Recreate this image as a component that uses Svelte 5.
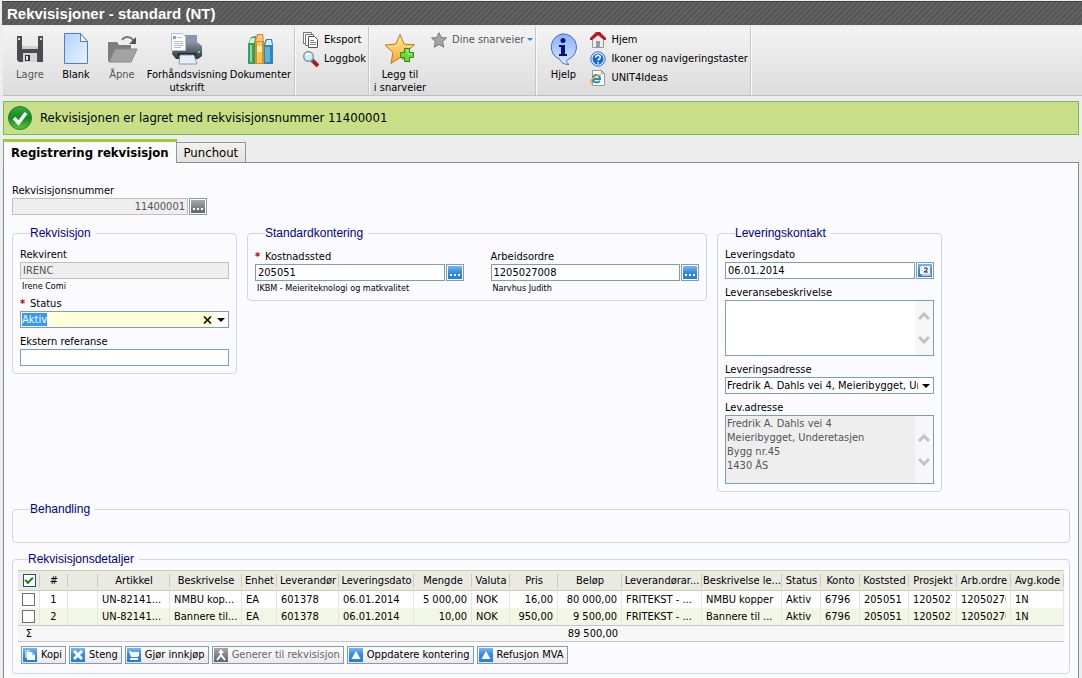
<script>
	import { onMount } from 'svelte';

	const columns = [
		{ key: 'nr', label: '#', width: 28, align: 'center' },
		{ key: 'blank', label: '', width: 30 },
		{ key: 'article', label: 'Artikkel', width: 72 },
		{ key: 'text', label: 'Beskrivelse', width: 72 },
		{ key: 'unit', label: 'Enhet', width: 35 },
		{ key: 'supplier', label: 'Leverandør', width: 62 },
		{ key: 'date', label: 'Leveringsdato', width: 75 },
		{ key: 'amount', label: 'Mengde', width: 58, align: 'right' },
		{ key: 'currency', label: 'Valuta', width: 38 },
		{ key: 'price', label: 'Pris', width: 48, align: 'right' },
		{ key: 'total', label: 'Beløp', width: 64, align: 'right' },
		{ key: 'supplierArticle', label: 'Leverandørar...', width: 80 },
		{ key: 'supplierText', label: 'Beskrivelse le...', width: 80 },
		{ key: 'status', label: 'Status', width: 39 },
		{ key: 'account', label: 'Konto', width: 39 },
		{ key: 'costCenter', label: 'Koststed', width: 49 },
		{ key: 'project', label: 'Prosjekt', width: 48 },
		{ key: 'workOrder', label: 'Arb.ordre', width: 54 },
		{ key: 'taxCode', label: 'Avg.kode', width: 53 }
	];

	const shared = {
		blank: '',
		article: 'UN-82141...',
		unit: 'EA',
		supplier: '601378',
		date: '06.01.2014',
		currency: 'NOK',
		supplierArticle: 'FRITEKST - ...',
		status: 'Aktiv',
		account: '6796',
		costCenter: '205051',
		project: '1205027',
		workOrder: '12050270',
		taxCode: '1N'
	};

	const rows = [
		{
			...shared,
			nr: 1,
			text: 'NMBU kop...',
			amount: '5 000,00',
			price: '16,00',
			total: '80 000,00',
			supplierText: 'NMBU kopper'
		},
		{
			...shared,
			nr: 2,
			text: 'Bannere til...',
			amount: '10,00',
			price: '950,00',
			total: '9 500,00',
			supplierText: 'Bannere til ...'
		}
	];

	const actions = [
		{ label: 'Kopi', icon: 'copy' },
		{ label: 'Steng', icon: 'close' },
		{ label: 'Gjør innkjøp', icon: 'cart' },
		{ label: 'Generer til rekvisisjon', icon: 'merge', disabled: true },
		{ label: 'Oppdatere kontering', icon: 'up' },
		{ label: 'Refusjon MVA', icon: 'up' }
	];

	const address = 'Fredrik A. Dahls vei 4\nMeieribygget, Underetasjen\nBygg nr.45\n1430 ÅS';

	let allChecked = $state(true);
	let statusInput;

	// The status field has focus when the form opens
	onMount(() => {
		statusInput.focus();
		statusInput.select();
	});
</script>

{#snippet lookup(label, gray = false)}
	<button class="lookup" aria-label={label}>
		<svg width="14" height="13" viewBox="0 0 14 13">
			<rect width="14" height="13" fill={gray ? 'url(#grayFill)' : 'url(#blueFill)'} />
			<path d="M2 8h2v2H2zM6 8h2v2H6zM10 8h2v2h-2z" fill="#fff" />
		</svg>
	</button>
{/snippet}

{#snippet scroller()}
	<div class="scroller" aria-hidden="true">
		<svg width="12" height="8" viewBox="0 0 12 8"><path d="M1 7l5-5 5 5" fill="none" stroke="#c3c3c3" stroke-width="3" /></svg>
		<svg width="12" height="8" viewBox="0 0 12 8"><path d="M1 1l5 5 5-5" fill="none" stroke="#c3c3c3" stroke-width="3" /></svg>
	</div>
{/snippet}

{#snippet caret()}
	<svg width="8" height="4" viewBox="0 0 8 4"><path d="M0 0h8L4 4z" fill="#000" /></svg>
{/snippet}

<svg class="defs" width="0" height="0" aria-hidden="true">
	<defs>
		<linearGradient id="blueFill" x1="0" y1="0" x2="0" y2="1">
			<stop offset="0" stop-color="#7db8f2" />
			<stop offset=".45" stop-color="#3a8be0" />
			<stop offset="1" stop-color="#1f7fe0" />
		</linearGradient>
		<linearGradient id="grayFill" x1="0" y1="0" x2="0" y2="1">
			<stop offset="0" stop-color="#a9a9a9" />
			<stop offset="1" stop-color="#636363" />
		</linearGradient>
		<linearGradient id="pageFill" x1="0" y1="0" x2="1" y2="1">
			<stop offset="0" stop-color="#b5d3fb" />
			<stop offset="1" stop-color="#e8f2ff" />
		</linearGradient>
		<linearGradient id="starFill" x1="0" y1="0" x2="0" y2="1">
			<stop offset="0" stop-color="#ffe7a8" />
			<stop offset="1" stop-color="#f7ab22" />
		</linearGradient>
		<linearGradient id="infoFill" x1="0" y1="0" x2="0" y2="1">
			<stop offset="0" stop-color="#8fb0f5" />
			<stop offset=".7" stop-color="#bcd6ff" />
			<stop offset="1" stop-color="#d8f2ff" />
		</linearGradient>
		<linearGradient id="okFill" x1="0" y1="0" x2="0" y2="1">
			<stop offset="0" stop-color="#35a845" />
			<stop offset=".5" stop-color="#138a1c" />
			<stop offset="1" stop-color="#5cc93a" />
		</linearGradient>
		<linearGradient id="printFill" x1="0" y1="0" x2="0" y2="1">
			<stop offset="0" stop-color="#8c97a5" />
			<stop offset="1" stop-color="#2b323d" />
		</linearGradient>
	</defs>
</svg>

<div class="page">
	<header><h1>Rekvisisjoner - standard (NT)</h1></header>

	<nav class="toolbar">
		<div class="group">
			<button class="tool" disabled>
				<svg width="32" height="32" viewBox="0 0 32 32">
					<path d="M3 3h26v26H5l-2-2z" fill="#4b4b4d" />
					<path d="M8 3h16v13H8z" fill="#ececec" />
					<path d="M8 13h16v3H8z" fill="#cfcfcf" />
					<path d="M4 5h2v2H4zM26 5h2v2h-2z" fill="#ddd" />
					<path d="M9 20h14v9H9z" fill="#d4d4d4" />
					<path d="M11 22h5v6h-5z" fill="#333" />
					<path d="M12 23h2v4h-2z" fill="#e8e8e8" />
				</svg>
				<span>Lagre</span>
			</button>
			<button class="tool">
				<svg width="32" height="32" viewBox="0 0 32 32">
					<path d="M4.500 .5h16l7 8v22h-23z" fill="url(#pageFill)" stroke="#4a80d0" />
					<path d="M20.500 .5v8h7z" fill="#fff" stroke="#4a80d0" />
				</svg>
				<span>Blank</span>
			</button>
			<button class="tool" disabled>
				<svg width="32" height="32" viewBox="0 0 32 32">
					<path d="M2 28V9h9l2 3h12v5H11L5 29z" fill="#7d7d7d" />
					<path d="M9 16h22l-6 13H3z" fill="#a3a3a3" stroke="#868686" />
					<path d="M16 7c3-4 9-4 12 1" fill="none" stroke="#777" stroke-width="2" />
					<path d="M30 4v7h-7z" fill="#555" />
				</svg>
				<span>Åpne</span>
			</button>
			<button class="tool wide">
				<svg width="32" height="32" viewBox="0 0 32 32">
					<path d="M14 2h12v11H14z" fill="#8797ae" />
					<path d="M2 13l4-4h20l5 4v10l-4 3H5l-4-5z" fill="url(#printFill)" />
					<path d="M7 20h18v3H7z" fill="#1e242e" />
					<path d="M9 22h14l3 9H8z" fill="#e6eff8" stroke="#8a9bb0" />
					<path d="M.5 .5h11l3 3v14H.5z" fill="#fff" stroke="#b5c0cc" />
					<path d="M2 3h3v3H2z" fill="#7ba6d8" />
					<path d="M6 4.500h5M3 8.500h9M3 10.500h9M3 12.500h9M3 14.500h7" stroke="#b4c0cd" />
					<path d="M27 18h2v2h-2z" fill="#6be04a" />
				</svg>
				<span>Forhåndsvisning utskrift</span>
			</button>
			<button class="tool docs">
				<svg width="32" height="32" viewBox="0 0 32 32">
					<path d="M3 11l3-7 5-1v28H3z" fill="#35a05e" />
					<path d="M4 10l2-5h4l-1 5z" fill="#d8eee0" />
					<path d="M5 12h2v17H5z" fill="#8fd9a8" />
					<path d="M18 13l3-7h6l1 6v19H18z" fill="#2e86b8" />
					<path d="M20 12l2-5h4l1 5z" fill="#d7ecf5" />
					<path d="M20 14h5v15h-5z" fill="#5eb4e0" />
					<path d="M10 8l2-7h6l1 7v23h-9z" fill="#e58a1f" />
					<path d="M12 9h5v21h-5z" fill="#ffc45c" />
					<path d="M11 8l2-6h4l1 6z" fill="#fdc88a" />
					<path d="M12 13h5v6h-5z" fill="#fff0b8" />
				</svg>
				<span>Dokumenter</span>
			</button>
		</div>

		<div class="group list">
			<button class="link">
				<svg width="16" height="16" viewBox="0 0 16 16">
					<path d="M.5 .5h8v11h-8z" fill="#fff" stroke="#777" />
					<path d="M2.500 2.500h8v11h-8z" fill="#fff" stroke="#777" />
					<path d="M5.500 4.500h6l3 3v8h-9z" fill="#fff" stroke="#555" />
					<path d="M7 8.500h4M7 10.500h6M7 12.500h6" stroke="#888" />
				</svg>
				Eksport
			</button>
			<button class="link">
				<svg width="16" height="16" viewBox="0 0 16 16">
					<path d="M9 9l6 6" stroke="#b01818" stroke-width="4" />
					<path d="M9 9l2 2" stroke="#555" stroke-width="3" />
					<circle cx="5.500" cy="5.500" r="4.800" fill="#c5effa" stroke="#8a97a5" stroke-width="1.500" />
					<path d="M3 5c0-2 2-3 4-2" fill="none" stroke="#fff" stroke-width="1.500" />
				</svg>
				Loggbok
			</button>
		</div>

		<div class="group">
			<button class="tool fav">
				<svg width="32" height="32" viewBox="0 0 32 32">
					<path d="M16 1.500l4.200 9.700 10.300.6-8 7 3 10.200-9.500-4.500-9 6 2-11L1 12l10.800-1z" fill="url(#starFill)" stroke="#b87a1c" />
					<path d="M20.500 15.500h5v4h4v5h-4v4h-5v-4h-4v-5h4z" fill="#6fd53f" stroke="#2c8a1d" />
					<path d="M22 17h2v4h4" fill="none" stroke="#b6f08f" />
				</svg>
				<span>Legg til<br />i snarveier</span>
			</button>
			<div class="list">
				<button class="link muted">
					<svg width="16" height="16" viewBox="0 0 16 16">
						<path d="M8 .8l2.200 4.700 5.300.5-4 3.600 1.300 5.600L8 12.500l-4.800 2.700 1.200-5.600L.6 6l5.200-.5z" fill="#a5a5a5" stroke="#777" />
					</svg>
					<span>Dine snarveier <i></i></span>
				</button>
			</div>
		</div>

		<div class="group">
			<button class="tool">
				<svg width="32" height="32" viewBox="0 0 32 32">
					<path d="M16 .8a13.300 13.300 0 0 1 5 25.700c-2 1-2 3 1 5-5 0-8-2-9-5A13.300 13.300 0 0 1 16 .8z" fill="url(#infoFill)" stroke="#4a68c0" />
					<circle cx="16" cy="7.500" r="2.500" fill="#0b1478" />
					<path d="M12 12h6v9h2v2h-8v-2h2v-7h-2z" fill="#0b1478" />
				</svg>
				<span>Hjelp</span>
			</button>
			<div class="list">
				<a class="link" href="#hjem">
					<svg width="16" height="16" viewBox="0 0 16 16">
						<path d="M2.500 7L8 3l5.500 4v8.500h-11z" fill="#eee" stroke="#999" />
						<path d="M6 9h4v6H6z" fill="#999" />
						<path d="M0 8V6l6-6h4l6 6v2h-2L8 3 2 8z" fill="#c4141d" />
					</svg>
					Hjem
				</a>
				<a class="link" href="#ikoner">
					<svg width="16" height="16" viewBox="0 0 16 16">
						<circle cx="8" cy="8" r="7.200" fill="#e6f1ff" stroke="#2b6fd4" />
						<circle cx="8" cy="8" r="5.500" fill="#1c66d8" />
						<path d="M5.800 6.500c0-3 4.500-3 4.500-.3 0 1.500-2 1.600-2.200 3.300M8 11v1.500" fill="none" stroke="#fff" stroke-width="1.600" />
					</svg>
					Ikoner og navigeringstaster
				</a>
				<a class="link" href="#ideas">
					<svg width="16" height="16" viewBox="0 0 16 16">
						<path d="M2.500 .5h9l3 3v12h-12z" fill="#fff" stroke="#999" />
						<path d="M11.500 .5v3h3z" fill="#ddd" stroke="#999" />
						<path d="M3 9h7c0-5-6-5-7-1s4 6 7 3" fill="none" stroke="#2188d4" stroke-width="2" />
						<path d="M1 14c-2-2 4-10 10-9" fill="none" stroke="#f0ac24" stroke-width="1.500" />
					</svg>
					UNIT4Ideas
				</a>
			</div>
		</div>
	</nav>

	<div class="message" role="status">
		<svg width="26" height="26" viewBox="0 0 26 26">
			<circle cx="13" cy="13" r="11.500" fill="url(#okFill)" stroke="#287c35" />
			<path d="M7 13l4.500 5L19 8" fill="none" stroke="#fff" stroke-width="3.500" />
		</svg>
		<span>Rekvisisjonen er lagret med rekvisisjonsnummer 11400001</span>
	</div>

	<div class="tabs" role="tablist">
		<button class="tab active" role="tab" aria-selected="true">Registrering rekvisisjon</button>
		<button class="tab" role="tab" aria-selected="false">Punchout</button>
	</div>

	<main>
		<div class="field number">
			<label for="reqno">Rekvisisjonsnummer</label>
			<div class="row">
				<input id="reqno" value="11400001" readonly />
				{@render lookup('Søk rekvisisjonsnummer', true)}
			</div>
		</div>

		<div class="groups">
			<fieldset class="narrow">
				<legend>Rekvisisjon</legend>
				<div class="field">
					<label for="requester">Rekvirent</label>
					<input id="requester" value="IRENC" readonly />
					<div class="hint">Irene Comi</div>
				</div>
				<div class="field">
					<label for="status"><b>*</b>Status</label>
					<div class="combo status">
						<input id="status" value="Aktiv" bind:this={statusInput} />
						<button class="clear" aria-label="Tøm">
							<svg width="9" height="8" viewBox="0 0 9 8"><path d="M1 .5l7 7M8 .5l-7 7" stroke="#000" stroke-width="1.500" /></svg>
						</button>
						<button class="open" aria-label="Velg status">{@render caret()}</button>
					</div>
				</div>
				<div class="field">
					<label for="extref">Ekstern referanse</label>
					<input id="extref" />
				</div>
			</fieldset>

			<fieldset class="posting">
				<legend>Standardkontering</legend>
				<div class="field">
					<label for="cost"><b>*</b>Kostnadssted</label>
					<div class="row">
						<input id="cost" value="205051" />
						{@render lookup('Søk kostnadssted')}
					</div>
					<div class="hint">IKBM - Meieriteknologi og matkvalitet</div>
				</div>
				<div class="field">
					<label for="order">Arbeidsordre</label>
					<div class="row">
						<input id="order" value="1205027008" />
						{@render lookup('Søk arbeidsordre')}
					</div>
					<div class="hint">Narvhus Judith</div>
				</div>
			</fieldset>

			<fieldset class="narrow">
				<legend>Leveringskontakt</legend>
				<div class="field">
					<label for="date">Leveringsdato</label>
					<div class="row">
						<input id="date" value="06.01.2014" />
						<button class="lookup" aria-label="Velg dato">
							<svg width="14" height="13" viewBox="0 0 14 13">
								<rect width="14" height="13" fill="url(#blueFill)" />
								<path d="M3 2h9v8H2V3z" fill="#f3f6fb" />
								<path d="M12 10V4l1 8H4l-1-2z" fill="#b8c8dc" />
								<path d="M6 4h3v2L6 8h4" fill="none" stroke="#223" />
							</svg>
						</button>
					</div>
				</div>
				<div class="field">
					<label for="deliverytext">Leveransebeskrivelse</label>
					<div class="memo">
						<textarea id="deliverytext"></textarea>
						{@render scroller()}
					</div>
				</div>
				<div class="field">
					<label for="place">Leveringsadresse</label>
					<div class="combo">
						<select id="place">
							<option>Fredrik A. Dahls vei 4, Meieribygget, Underetasjen</option>
						</select>
						<span class="open">{@render caret()}</span>
					</div>
				</div>
				<div class="field">
					<label for="address">Lev.adresse</label>
					<div class="memo tall">
						<textarea id="address" readonly value={address}></textarea>
						{@render scroller()}
					</div>
				</div>
			</fieldset>
		</div>

		<fieldset class="processing">
			<legend>Behandling</legend>
		</fieldset>

		<fieldset class="details">
			<legend>Rekvisisjonsdetaljer</legend>
			<table>
				<colgroup>
					<col style="width: 22px" />
					{#each columns as col}
						<col style="width: {col.width}px" />
					{/each}
				</colgroup>
				<thead>
					<tr>
						<th class="pick"><input type="checkbox" aria-label="Velg alle" bind:checked={allChecked} /></th>
						{#each columns as col}
							<th>{col.label}</th>
						{/each}
					</tr>
				</thead>
				<tbody>
					{#each rows as row}
						<tr>
							<td class="pick"><input type="checkbox" aria-label="Velg rad {row.nr}" /></td>
							{#each columns as col}
								<td class={col.align}><div>{row[col.key]}</div></td>
							{/each}
						</tr>
					{/each}
				</tbody>
				<tfoot>
					<tr>
						<td class="center">Σ</td>
						{#each columns as col}
							<td class={col.align}>{col.key === 'total' ? '89 500,00' : ''}</td>
						{/each}
					</tr>
				</tfoot>
			</table>

			<div class="actions">
				{#each actions as action}
					<button disabled={action.disabled}>
						<svg width="14" height="14" viewBox="0 0 14 14">
							<rect width="14" height="14" fill={action.disabled ? 'url(#grayFill)' : 'url(#blueFill)'} />
							{#if action.icon === 'copy'}
								<path d="M2 2h5v8H2z" fill="#a9d0f5" />
								<path d="M4 4h5l3 3v5H4z" fill="#fff" />
								<path d="M9 4v3h3z" fill="#9cc6f0" />
							{:else if action.icon === 'close'}
								<path d="M3 3l8 8M11 3l-8 8" stroke="#fff" stroke-width="3" />
							{:else if action.icon === 'cart'}
								<path d="M2 3h2v1h8v4l-2 1H4zM3 10h8v2H3z" fill="#fff" />
							{:else if action.icon === 'merge'}
								<path d="M7 2v5M3 12l4-5 4 5" fill="none" stroke="#fff" stroke-width="2" />
								<path d="M4 5h6L7 1z" fill="#fff" />
							{:else}
								<path d="M7 3l4.500 8h-9z" fill="#fff" />
							{/if}
						</svg>
						{action.label}
					</button>
				{/each}
			</div>
		</fieldset>
	</main>
</div>

<style>
	:global(body) {
		background: #ededee;
	}

	.page {
		box-sizing: border-box;
		min-height: 100vh;
		display: flex;
		flex-direction: column;
		padding: 1px 3px 0;
		font: 11px/14px 'DejaVu Sans Condensed', 'Noto Sans', sans-serif;
		color: #000;
	}

	.defs {
		display: block;
	}

	button,
	input,
	select,
	textarea {
		box-sizing: border-box;
		margin: 0;
		font: inherit;
		color: inherit;
	}

	svg {
		flex: none;
	}

	header {
		margin: 0 -3px 0 -1px;
		padding: 0 5px;
		height: 23px;
		border-top: 1px solid #444;
		background: repeating-linear-gradient(135deg, #565656 0 2px, #626262 2px 4px);
	}

	h1 {
		margin: 0;
		font: bold 15px/23px 'Liberation Sans', Arial, sans-serif;
		color: #fff;
	}

	/* toolbar */
	.toolbar {
		display: flex;
		margin: 2px -3px 0 0;
		height: 68px;
		border-bottom: 1px solid #c0c0c0;
		background: linear-gradient(#f3f3f3, #dcdcdc);
	}

	.group {
		display: flex;
		padding: 6px 2px 0 4px;
		border-right: 1px solid #c6c6c6;
		box-shadow: 1px 0 #fafafa;
	}

	.tool {
		display: flex;
		flex-direction: column;
		align-items: center;
		gap: 3px;
		width: 46px;
		padding: 0;
		border: 0;
		background: none;
		line-height: 13px;
		text-align: center;
	}

	.tool:disabled {
		color: #555;
	}

	.tool.wide {
		width: 84px;
	}

	.tool.docs {
		width: 63px;
	}

	.tool.fav {
		width: 54px;
	}

	.list {
		display: flex;
		flex-direction: column;
		align-items: flex-start;
		padding-left: 4px;
	}

	.group.list {
		padding-top: 3px;
		padding-left: 8px;
	}

	.group .list {
		margin-top: -3px;
	}

	.link {
		display: flex;
		align-items: center;
		gap: 5px;
		height: 19px;
		padding: 0;
		border: 0;
		background: none;
		color: #000;
		text-decoration: none;
		white-space: nowrap;
	}

	.muted {
		color: #555;
	}

	.muted i {
		display: inline-block;
		border: 3px solid transparent;
		border-top-color: #3c7fc4;
		border-bottom: 0;
		vertical-align: middle;
	}

	.message {
		display: flex;
		align-items: center;
		gap: 7px;
		margin-top: 5px;
		padding-left: 3px;
		height: 32px;
		border: 1px solid #6dbb65;
		background: #c8df87;
		font-size: 13px;
	}

	/* tabs */
	.tabs {
		display: flex;
		align-items: flex-end;
		margin-top: 4px;
		height: 23px;
		font-size: 13px;
	}

	.tab {
		height: 20px;
		padding: 0 7px;
		border: 1px solid #8c9a9c;
		border-left: 0;
		border-bottom: 0;
		background: linear-gradient(#f3f1ec, #e4e2dc);
	}

	.tab.active {
		position: relative;
		height: 24px;
		margin-bottom: -1px;
		border: 1px solid #8c9a9c;
		border-top: 3px solid #9ccb3b;
		border-bottom: 0;
		background: #fbfbfe;
		font-weight: bold;
	}

	main {
		flex: 1;
		padding: 21px 8px 3px;
		border: 1px solid #7f8d90;
		border-bottom: 0;
		background: #fbfbfe;
	}

	/* form */
	.groups {
		display: flex;
		align-items: flex-start;
		gap: 10px;
		margin-top: 11px;
	}

	fieldset {
		box-sizing: border-box;
		min-width: 0;
		margin: 0;
		padding: 8px 7px 7px;
		border: 1px solid #c8d9ee;
		border-radius: 4px;
	}

	legend {
		margin-left: 10px;
		padding: 0 5px 0 0;
		font: 12px/14px 'Liberation Sans', Arial, sans-serif;
		color: #00008b;
	}

	.narrow {
		width: 225px;
	}

	.narrow .field + .field {
		margin-top: 7px;
	}

	.posting {
		display: grid;
		grid-template-columns: 1fr 1fr;
		column-gap: 27px;
		width: 460px;
		padding: 10px 7px 8px;
	}

	.number {
		width: 195px;
	}

	.number input {
		text-align: right;
	}

	label {
		display: block;
	}

	label b {
		display: inline-block;
		width: 10px;
		color: #b00000;
	}

	.field input,
	.combo,
	.memo {
		display: block;
		width: 100%;
		height: 17px;
		padding: 0 2px;
		border: 1px solid #7b9ebd;
		background: #fff;
	}

	.field input:read-only {
		border-color: #c0c0c0;
		background: #eee;
		color: #555;
	}

	.row {
		display: flex;
		gap: 1px;
	}

	.row input {
		flex: 1;
		min-width: 0;
	}

	.lookup {
		display: flex;
		align-items: center;
		justify-content: center;
		width: 18px;
		height: 17px;
		padding: 0;
		border: 1px solid #7b9ebd;
		background: #fff;
	}

	.hint {
		height: 11px;
		padding-left: 2px;
		font-size: 9px;
		line-height: 15px;
		white-space: nowrap;
	}

	.combo,
	.memo {
		display: flex;
		box-sizing: border-box;
		padding: 0;
	}

	.combo input,
	.combo select {
		flex: 1;
		min-width: 0;
		height: 15px;
		padding: 0 1px;
		border: 0;
		outline: none;
		background: none;
		appearance: none;
		text-overflow: clip;
	}

	.combo.status {
		background: #ffffd8;
	}

	.combo input::selection {
		background: #3399ff;
		color: #fff;
	}

	.clear,
	.open {
		display: flex;
		align-items: center;
		justify-content: center;
		width: 14px;
		padding: 0;
		border: 0;
		background: none;
	}

	.open {
		background: #fff;
	}

	.memo {
		height: 56px;
	}

	.memo.tall {
		height: 69px;
	}

	textarea {
		flex: 1;
		min-width: 0;
		padding: 1px;
		border: 0;
		outline: none;
		resize: none;
		overflow: hidden;
		background: #fff;
	}

	textarea:read-only {
		background: #eee;
		color: #555;
	}

	.scroller {
		display: flex;
		flex-direction: column;
		align-items: center;
		justify-content: center;
		gap: 16px;
		width: 18px;
		background: #f7f7f9;
	}

	.processing {
		height: 41px;
		margin-top: 10px;
	}

	/* detail table */
	.details {
		margin-top: 9px;
		padding: 4px 5px 9px;
	}

	table {
		width: 100%;
		table-layout: fixed;
		border-collapse: separate;
		border-spacing: 0;
	}

	th,
	td {
		overflow: hidden;
		padding: 1px 4px 0;
		white-space: nowrap;
	}

	th {
		height: 18px;
		padding: 1px 0 0;
		border-top: 1px solid #c9cfa0;
		border-bottom: 1px solid #c9cfa0;
		background: linear-gradient(#cfc9b8, #cfc9b8) right center / 1px 13px no-repeat #e9eae3;
		font-weight: normal;
		text-align: center;
	}

	tbody td {
		height: 16px;
		border-right: 1px solid #e4e6e4;
		background: #fff;
	}

	td div {
		overflow: hidden;
	}

	tbody tr:nth-child(even) td {
		background: #f1f6e5;
	}

	tfoot td {
		height: 14px;
		border-top: 1px solid #c6c6c6;
		border-bottom: 1px solid #c6c6c6;
		background: #f7f7f7;
	}

	.center {
		text-align: center;
	}

	.right {
		text-align: right;
	}

	.pick {
		padding: 0;
		text-align: center;
		line-height: 0;
	}

	.pick input {
		appearance: none;
		width: 13px;
		height: 13px;
		border: 1px solid #707070;
		background: #fff;
		vertical-align: middle;
	}

	.pick input:checked {
		border-color: #1c5180;
	}

	.pick input:checked::before {
		content: '';
		display: block;
		width: 6px;
		height: 3px;
		margin: 2px 1px;
		border: solid #1a7a1a;
		border-width: 0 0 2px 2px;
		transform: rotate(-45deg);
	}

	.actions {
		display: flex;
		gap: 3px;
		padding: 4px 3px 0;
	}

	.actions button {
		display: flex;
		align-items: center;
		gap: 4px;
		height: 18px;
		padding: 0 3px 0 1px;
		border: 1px solid #7b9ebd;
		background: linear-gradient(#fff, #ebe8e6);
		white-space: nowrap;
	}

	.actions button:disabled {
		color: #666;
	}
</style>
